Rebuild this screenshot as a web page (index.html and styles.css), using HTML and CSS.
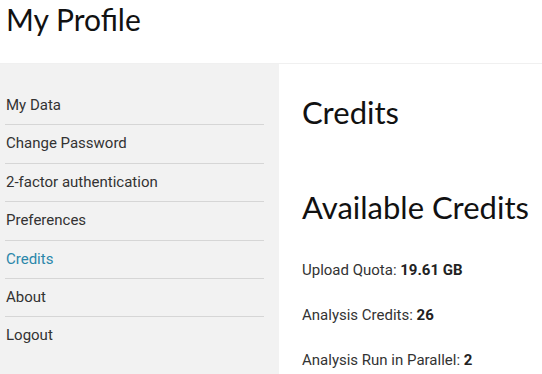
FILE: index.html
```html
<!DOCTYPE html>
<html lang="en">
<head>
    <meta charset="UTF-8">
    <meta name="viewport" content="width=device-width, initial-scale=1.0">
    <title>My Profile</title>
    <link rel="stylesheet" href="styles.css">
</head>
<body>

    <header class="page-header">
        <h1>My Profile</h1>
    </header>

    <div class="profile">
        <nav class="side-nav">
            <a href="#" class="nav-item">My Data</a>
            <a href="#" class="nav-item">Change Password</a>
            <a href="#" class="nav-item">2-factor authentication</a>
            <a href="#" class="nav-item">Preferences</a>
            <a href="#" class="nav-item active">Credits</a>
            <a href="#" class="nav-item">About</a>
            <a href="#" class="nav-item last">Logout</a>
        </nav>

        <main class="content">
            <h2 class="section-title">Credits</h2>
            <h2 class="section-title sub">Available Credits</h2>
            <p class="stat">Upload Quota: <b>19.61 GB</b></p>
            <p class="stat">Analysis Credits: <b>26</b></p>
            <p class="stat">Analysis Run in Parallel: <b>2</b></p>
        </main>
    </div>

</body>
</html>
```

FILE: styles.css
```css
* {
    margin: 0;
    padding: 0;
    box-sizing: border-box;
}

body {
    font-family: 'Roboto', 'Liberation Sans', sans-serif;
    background: #ffffff;
    color: #333;
    height: 374px;
    display: flex;
    flex-direction: column;
    overflow: hidden;
}

.page-header {
    flex-shrink: 0;
    height: 64px;
    border-bottom: 1px solid #f0f0f0;
    padding: 1px 6px 0;
}

.page-header h1,
.section-title {
    font-family: 'Lato', 'Open Sans', sans-serif;
    font-weight: 400;
    color: #111;
}

.page-header h1 {
    font-size: 30px;
    line-height: 36px;
}

.profile {
    flex: 1;
    display: flex;
}

.side-nav {
    flex-shrink: 0;
    width: 279px;
    background-color: #f2f2f2;
    padding: 23px 15px 0 5px;
    display: flex;
    flex-direction: column;
}

.nav-item {
    display: block;
    padding: 10px 0 10px 1px;
    line-height: 17.4px;
    font-size: 15px;
    color: #333;
    text-decoration: none;
    border-bottom: 1px solid #d6d6d6;
}

.nav-item.active {
    color: #2b87aa;
}

.nav-item.last {
    border-bottom: none;
}

.content {
    flex: 1;
    padding: 28px 10px 0 23px;
    white-space: nowrap;
}

.section-title {
    font-size: 31px;
    line-height: 40px;
}

.section-title.sub {
    margin-top: 55px;
}

.stat {
    font-size: 15px;
    line-height: 20px;
    margin-top: 25px;
}

.section-title + .stat {
    margin-top: 33px;
}

.stat b {
    font-weight: 700;
    color: #222;
}
```
